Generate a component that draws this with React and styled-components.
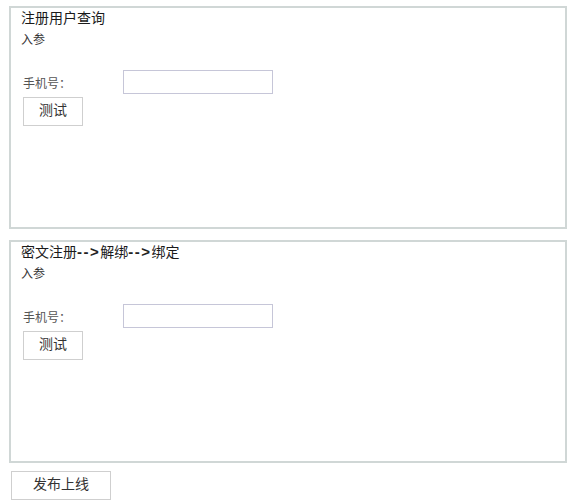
import React from "react"
import styled, { createGlobalStyle } from "styled-components"

const GlobalStyle = createGlobalStyle`
  body {
    margin: 0;
    background: #ffffff;
    font-family: "Liberation Sans", "Noto Sans CJK SC", sans-serif;
    color: #222;
  }
`

const cases = [
  { title: <>注册用户查询</> },
  { title: <>密文注册<Arrow>--&gt;</Arrow>解绑<Arrow>--&gt;</Arrow>绑定</> },
]

function Arrow({ children }) {
  return <Bold>{children}</Bold>
}

const App = () => {
  return (
    <>
      <GlobalStyle />
      <Page>
        {cases.map((c, i) => (
          <Panel key={i}>
            <Title>{c.title}</Title>
            <SubTitle>入参</SubTitle>
            <FieldRow>
              <Label>手机号：</Label>
              <Input type="text" />
            </FieldRow>
            <Button>测试</Button>
          </Panel>
        ))}
        <PublishButton>发布上线</PublishButton>
      </Page>
    </>
  )
}

export default App

const Page = styled.div`
  display: flex;
  flex-direction: column;
  align-items: flex-start;
  padding: 6px 0 0 9px;
`

const Panel = styled.section`
  box-sizing: border-box;
  width: 558px;
  height: 223px;
  margin-bottom: 11px;
  padding: 0 12px 0 10px;
  border: 2px solid #d0d7d6;
  display: flex;
  flex-direction: column;
  align-items: flex-start;
`

const Title = styled.div`
  font-size: 14px;
  line-height: 20px;
  color: #1a1a1a;
`

const Bold = styled.b`
  font-family: "Liberation Sans", sans-serif;
  font-size: 15px;
  font-weight: bold;
  letter-spacing: 1.5px;
  color: #222;
`

const SubTitle = styled.div`
  margin-top: 2px;
  font-size: 12px;
  line-height: 20px;
  color: #333;
`

const FieldRow = styled.div`
  display: flex;
  align-items: center;
  margin-top: 20px;
  height: 24px;
  padding-left: 2px;
`

const Label = styled.span`
  width: 100px;
  font-size: 12px;
  color: #555;
`

const Input = styled.input`
  box-sizing: border-box;
  width: 150px;
  height: 24px;
  margin: 0;
  border: 1px solid #c6c6d8;
  outline: none;
`

const Button = styled.button`
  box-sizing: border-box;
  width: 60px;
  height: 29px;
  margin: 3px 0 0 2px;
  padding: 0 0 3px;
  background: #ffffff;
  border: 1px solid #cfcfcf;
  font-family: "Liberation Sans", "Noto Sans CJK SC", sans-serif;
  font-size: 14px;
  line-height: 20px;
  color: #333;
`

const PublishButton = styled(Button)`
  width: 100px;
  margin: -3px 0 0 2px;
`
